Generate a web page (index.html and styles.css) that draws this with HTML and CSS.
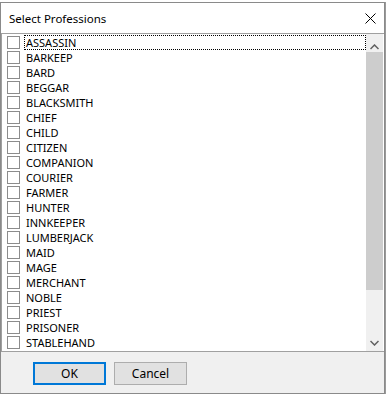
FILE: index.html
```html
<!DOCTYPE html>
<html lang="en">
<head>
    <meta charset="UTF-8">
    <meta name="viewport" content="width=device-width, initial-scale=1.0">
    <title>Select Professions</title>
    <link rel="stylesheet" href="styles.css">
</head>
<body>
    <div class="dialog">
        <div class="titlebar">
            <span class="title">Select Professions</span>
            <svg class="close" width="11" height="11" viewBox="0 0 11 11">
                <path d="M0.5 0.5 L10.5 10.5 M10.5 0.5 L0.5 10.5" stroke="#000" stroke-width="1" fill="none"/>
            </svg>
        </div>

        <div class="listbox">
            <ul class="items">
                <li class="item focused"><span class="box"></span><span class="label">ASSASSIN</span></li>
                <li class="item"><span class="box"></span><span class="label">BARKEEP</span></li>
                <li class="item"><span class="box"></span><span class="label">BARD</span></li>
                <li class="item"><span class="box"></span><span class="label">BEGGAR</span></li>
                <li class="item"><span class="box"></span><span class="label">BLACKSMITH</span></li>
                <li class="item"><span class="box"></span><span class="label">CHIEF</span></li>
                <li class="item"><span class="box"></span><span class="label">CHILD</span></li>
                <li class="item"><span class="box"></span><span class="label">CITIZEN</span></li>
                <li class="item"><span class="box"></span><span class="label">COMPANION</span></li>
                <li class="item"><span class="box"></span><span class="label">COURIER</span></li>
                <li class="item"><span class="box"></span><span class="label">FARMER</span></li>
                <li class="item"><span class="box"></span><span class="label">HUNTER</span></li>
                <li class="item"><span class="box"></span><span class="label">INNKEEPER</span></li>
                <li class="item"><span class="box"></span><span class="label">LUMBERJACK</span></li>
                <li class="item"><span class="box"></span><span class="label">MAID</span></li>
                <li class="item"><span class="box"></span><span class="label">MAGE</span></li>
                <li class="item"><span class="box"></span><span class="label">MERCHANT</span></li>
                <li class="item"><span class="box"></span><span class="label">NOBLE</span></li>
                <li class="item"><span class="box"></span><span class="label">PRIEST</span></li>
                <li class="item"><span class="box"></span><span class="label">PRISONER</span></li>
                <li class="item"><span class="box"></span><span class="label">STABLEHAND</span></li>
            </ul>

            <div class="scrollbar">
                <div class="arrow up">
                    <svg width="9" height="6" viewBox="0 0 9 6">
                        <path d="M0.5 5 L4.5 1 L8.5 5" stroke="#606060" stroke-width="1.5" fill="none"/>
                    </svg>
                </div>
                <div class="track"><div class="thumb"></div></div>
                <div class="arrow down">
                    <svg width="9" height="6" viewBox="0 0 9 6">
                        <path d="M0.5 1 L4.5 5 L8.5 1" stroke="#606060" stroke-width="1.5" fill="none"/>
                    </svg>
                </div>
            </div>
        </div>

        <div class="buttons">
            <button class="btn default">OK</button>
            <button class="btn">Cancel</button>
        </div>
    </div>
</body>
</html>
```

FILE: styles.css
```css
/* General */
body {
    margin: 0;
    background: #fff;
    font-family: 'Noto Sans', 'Liberation Sans', sans-serif;
    font-size: 11px;
    color: #000;
}

/* Dialog window */
.dialog {
    box-sizing: border-box;
    width: 385px;
    height: 392px;
    margin-top: 2px;
    border: 1px solid #8a8a8a;
    box-shadow: 1px 0 0 #9a9a9a;
    background: #f0f0f0;
    display: flex;
    flex-direction: column;
}

/* Title bar */
.titlebar {
    height: 30px;
    background: #fff;
    display: flex;
    align-items: center;
    justify-content: space-between;
    padding: 0 8px 0 8px;
}

.title {
    font-size: 11.5px;
}

.close {
    display: block;
}

/* List box */
.listbox {
    height: 317px;
    border-top: 1px solid #a0a0a0;
    border-left: 1px solid #a0a0a0;
    border-bottom: 1px solid #a0a0a0;
    padding-right: 1px;
    background: #fff;
    display: flex;
}

.items {
    list-style: none;
    margin: 0;
    padding: 1px 0 0 5px;
    flex: 1;
}

.item {
    height: 15px;
    display: flex;
    align-items: center;
}

.box {
    box-sizing: border-box;
    width: 13px;
    height: 13px;
    border: 1px solid #8c8c8c;
    background: #fff;
    margin-right: 4px;
    flex-shrink: 0;
}

.label {
    flex: 1;
    height: 13px;
    line-height: 13px;
    padding-left: 1px;
    border: 1px solid transparent;
    white-space: nowrap;
}

.focused .label {
    border: 1px dotted #000;
}

/* Scrollbar */
.scrollbar {
    width: 17px;
    background: #f0f0f0;
    display: flex;
    flex-direction: column;
}

.arrow {
    height: 17px;
    display: flex;
    justify-content: center;
}

.arrow.up {
    align-items: flex-end;
    padding-bottom: 1px;
    box-sizing: border-box;
}

.arrow.down {
    align-items: center;
}

.track {
    flex: 1;
}

.thumb {
    height: 238px;
    margin-top: 1px;
    background: #cdcdcd;
}

/* Buttons */
.buttons {
    flex: 1;
    display: flex;
    gap: 8px;
    padding: 10px 0 0 32px;
    align-items: flex-start;
}

.btn {
    box-sizing: border-box;
    width: 73px;
    height: 23px;
    background: #e1e1e1;
    border: 1px solid #adadad;
    font-family: 'Noto Sans', 'Liberation Sans', sans-serif;
    font-size: 12px;
    color: #000;
    padding: 0;
}

.btn.default {
    border: 2px solid #0078d7;
}
```
